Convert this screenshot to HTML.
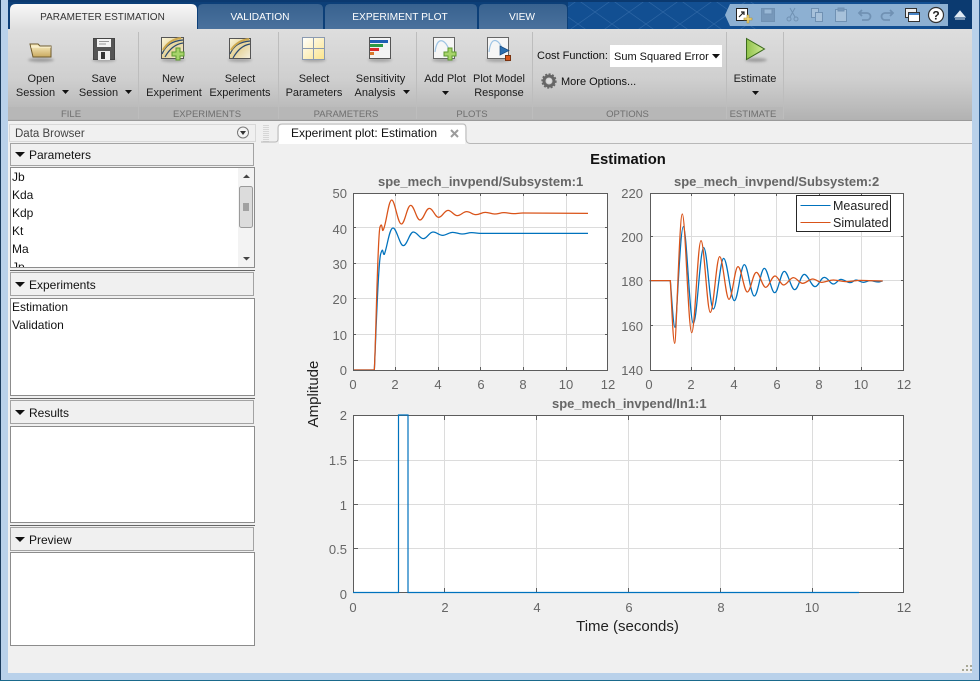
<!DOCTYPE html>
<html><head><meta charset="utf-8"><style>
html,body{margin:0;padding:0;width:980px;height:681px;overflow:hidden;background:#f0f0f0}
svg{display:block;position:absolute;left:0;top:0}
text{font-family:"Liberation Sans",sans-serif;white-space:pre}
.rb{font-size:11px;fill:#1c1c1c;text-anchor:middle}
.ft{font-size:9.500px;fill:#6f6f6f;text-anchor:middle}
.tb{font-size:10.200px;fill:#fff;text-anchor:middle}
.ui{font-size:12px;fill:#111}
.us{font-size:11px;fill:#111}
.tk{font-size:13px;fill:#666}
.tr{font-size:13px;fill:#666;text-anchor:end}
.tm{font-size:13px;fill:#666;text-anchor:middle}
.pt{font-size:13px;font-weight:bold;fill:#666;text-anchor:start}
.grid{stroke:#dcdcdc;stroke-width:1;fill:none}
.box{stroke:#5c5c5c;stroke-width:1;fill:none}
.tick{stroke:#5c5c5c;stroke-width:1;fill:none}
.blu{stroke:#0072bd;stroke-width:3.800;fill:none}
.red{stroke:#d95319;stroke-width:3.800;fill:none}
.hd{fill:#f0f0f0;stroke:#a3a3a3}
.ls{fill:#fff;stroke:#8c8c8c;stroke-width:1}
</style></head><body>
<svg width="980" height="681" viewBox="0 0 980 681" xmlns="http://www.w3.org/2000/svg">
<defs>
<linearGradient id="rib" x1="0" y1="0" x2="0" y2="1"><stop offset="0" stop-color="#dedede"/><stop offset=".55" stop-color="#cfcfcf"/><stop offset="1" stop-color="#b2b2b2"/></linearGradient>
<linearGradient id="atab" x1="0" y1="0" x2="0" y2="1"><stop offset="0" stop-color="#f8f8f8"/><stop offset="1" stop-color="#dfdfdf"/></linearGradient>
<linearGradient id="itab" x1="0" y1="0" x2="0" y2="1"><stop offset="0" stop-color="#38628f"/><stop offset="1" stop-color="#4a719d"/></linearGradient>
<linearGradient id="yel" x1="0" y1="0" x2="1" y2="1"><stop offset="0" stop-color="#fff"/><stop offset="1" stop-color="#fbe48a"/></linearGradient>
<linearGradient id="fold" x1="0" y1="0" x2="0" y2="1"><stop offset="0" stop-color="#fdf3c8"/><stop offset="1" stop-color="#c9a95f"/></linearGradient>
<linearGradient id="grn" x1="0" y1="0" x2="1" y2="0"><stop offset="0" stop-color="#8fc24a"/><stop offset="1" stop-color="#d2ec9a"/></linearGradient>
<linearGradient id="cp" x1="0" y1="0" x2="1" y2="1"><stop offset="0" stop-color="#fbf6dc"/><stop offset=".5" stop-color="#e6d49a"/><stop offset="1" stop-color="#f4f0e0"/></linearGradient>
<pattern id="lat" width="34" height="24" patternUnits="userSpaceOnUse"><path d="M0 0L34 24M34 0L0 24" stroke="#4a7db8" stroke-width=".7" fill="none" opacity=".5"/></pattern>
<filter id="sh" x="-30%" y="-100%" width="160%" height="300%"><feGaussianBlur stdDeviation="1.4"/></filter>
</defs>

<!-- window frame -->
<rect width="980" height="681" fill="#b9d1ea"/>
<rect x="0" y="0" width="1" height="681" fill="#1a3a5c"/>
<rect x="0" y="680" width="980" height="1" fill="#1a6a8c"/>
<rect x="979" y="0" width="1" height="681" fill="#2a5a8c"/>
<rect x="8" y="120" width="964" height="553" fill="#f0f0f0"/>

<!-- header band -->
<rect x="8" y="0" width="964" height="29" fill="#124f92"/>
<rect x="560" y="0" width="200" height="29" fill="url(#lat)"/>
<rect x="8" y="0" width="560" height="29" fill="#0c3f78"/>
<rect x="8" y="0" width="964" height="2" fill="#0b396f"/>
<rect x="940" y="0" width="32" height="29" fill="#0b3a70"/>

<!-- tabs -->
<path d="M10 29V10Q10 4 16 4H191Q197 4 197 10V29Z" fill="url(#atab)"/>
<path d="M198 29V9Q198 4 203 4H318Q323 4 323 9V29Z" fill="url(#itab)"/>
<path d="M325 29V9Q325 4 330 4H472Q477 4 477 9V29Z" fill="url(#itab)"/>
<path d="M479 29V9Q479 4 484 4H562Q567 4 567 9V29Z" fill="url(#itab)"/>
<text x="102.500" y="20" fill="#333" text-anchor="middle" style="font-size:10px">PARAMETER ESTIMATION</text>
<text x="260" y="20" class="tb">VALIDATION</text>
<text x="400" y="20" class="tb">EXPERIMENT PLOT</text>
<text x="522" y="20" class="tb">VIEW</text>

<!-- ribbon -->
<rect x="8" y="29" width="964" height="91" fill="url(#rib)"/>
<rect x="8" y="107" width="775" height="12" fill="#b7b7b7"/>
<rect x="8" y="120" width="964" height="1" fill="#9a9a9a"/>
<g stroke="#bdbdbd" stroke-width="1">
<path d="M138.500 32V119M278.500 32V119M416.500 32V119M532.500 32V119M726.500 32V119M783.500 32V119"/>
</g>

<text x="41" y="82" class="rb">Open</text>
<text x="35.500" y="96" class="rb">Session</text>
<path d="M62 90h7l-3.500 4z" fill="#111"/>
<text x="104" y="82" class="rb">Save</text>
<text x="98.500" y="96" class="rb">Session</text>
<path d="M125 90h7l-3.500 4z" fill="#111"/>
<text x="173" y="82" class="rb">New</text>
<text x="174" y="96" class="rb">Experiment</text>
<text x="240" y="82" class="rb">Select</text>
<text x="240" y="96" class="rb">Experiments</text>
<text x="314" y="82" class="rb">Select</text>
<text x="314" y="96" class="rb">Parameters</text>
<text x="380.500" y="82" class="rb">Sensitivity</text>
<text x="375" y="96" class="rb">Analysis</text>
<path d="M403 90h7l-3.500 4z" fill="#111"/>
<text x="445" y="82" class="rb">Add Plot</text>
<path d="M442 91h7l-3.500 4z" fill="#111"/>
<text x="499" y="82" class="rb">Plot Model</text>
<text x="499" y="96" class="rb">Response</text>
<text x="755" y="82" class="rb">Estimate</text>
<path d="M752 91h7l-3.500 4z" fill="#111"/>

<text x="71" y="117" class="ft">FILE</text>
<text x="207" y="117" class="ft">EXPERIMENTS</text>
<text x="346" y="117" class="ft">PARAMETERS</text>
<text x="472" y="117" class="ft">PLOTS</text>
<text x="627.500" y="117" class="ft">OPTIONS</text>
<text x="753" y="117" class="ft">ESTIMATE</text>

<text x="537" y="59" class="us">Cost Function:</text>
<rect x="610" y="45" width="112" height="22" fill="#fff"/>
<text x="614" y="60" class="us">Sum Squared Error</text>
<path d="M712 54h8l-4 4.500z" fill="#111"/>
<text x="561" y="85" class="us">More Options...</text>

<!-- gear -->
<g fill="none" stroke="#666">
<circle cx="549" cy="81" r="5" stroke-width="3"/>
<circle cx="549" cy="81" r="7" stroke-width="1.300" stroke-dasharray="2 1.600"/>
</g>
<circle cx="549" cy="81" r="2.500" fill="#ddd"/>

<!-- Open folder -->
<ellipse cx="41" cy="60" rx="13" ry="2" fill="#777" opacity=".6" filter="url(#sh)"/>
<path d="M30 44h8l2 2h11v11H33z" fill="url(#fold)" stroke="#6e5a2c"/>
<path d="M31 47h20" stroke="#fff8dc" fill="none"/>
<!-- Save floppy -->
<ellipse cx="104" cy="60" rx="12" ry="2" fill="#777" opacity=".5" filter="url(#sh)"/>
<path d="M93.500 38.500h21v21h-21z" fill="#555" stroke="#444"/>
<rect x="97" y="39" width="14" height="8" fill="#f4f4f4"/>
<path d="M99 41.500h10M99 44h7" stroke="#999"/>
<rect x="98" y="51" width="12" height="9" fill="#eee"/>
<rect x="101" y="52" width="4" height="7" fill="#333"/>
<!-- New Experiment -->
<ellipse cx="173" cy="60" rx="12" ry="2" fill="#777" opacity=".5" filter="url(#sh)"/>
<rect x="161.500" y="37.500" width="22" height="21" fill="url(#cp)" stroke="#555"/>
<path d="M162 54C166 45 172 41 183 40M165 57C170 48 176 44 183 43" fill="none" stroke="#2b4a70" stroke-width="1.200"/>
<path d="M163 50C167 43 173 39 181 38" fill="none" stroke="#cda84d" stroke-width="2"/>
<path d="M176 48h4v4h4v4h-4v4h-4v-4h-4v-4h4z" fill="#a7d36a" stroke="#5d9a2e"/>
<!-- Select Experiments -->
<ellipse cx="240" cy="60" rx="12" ry="2" fill="#777" opacity=".5" filter="url(#sh)"/>
<rect x="229.500" y="38.500" width="21" height="20" fill="url(#cp)" stroke="#555"/>
<path d="M230 54C234 45 240 42 250 41M233 58C238 49 244 45 250 44" fill="none" stroke="#2b4a70" stroke-width="1.200"/>
<path d="M231 50C235 44 241 40 249 39" fill="none" stroke="#cda84d" stroke-width="2"/>
<!-- Select Parameters -->
<ellipse cx="314" cy="60" rx="12" ry="2" fill="#777" opacity=".5" filter="url(#sh)"/>
<rect x="302.500" y="37.500" width="22" height="22" fill="url(#yel)" stroke="#8b9ab0"/>
<path d="M313.500 38V59M303 48.500H324" stroke="#8b9ab0" fill="none"/>
<!-- Sensitivity -->
<ellipse cx="380" cy="60" rx="12" ry="2" fill="#777" opacity=".5" filter="url(#sh)"/>
<rect x="369.500" y="37.500" width="21" height="21" fill="#f3f3f3" stroke="#555"/>
<rect x="370" y="40" width="18" height="3" fill="#1f5fb4"/>
<rect x="370" y="44" width="13" height="3" fill="#2e9a45"/>
<rect x="370" y="48" width="9" height="3" fill="#d82c2c"/>
<rect x="370" y="52" width="4" height="3" fill="#d8792c"/>
<!-- Add Plot -->
<ellipse cx="444" cy="60" rx="12" ry="2" fill="#777" opacity=".5" filter="url(#sh)"/>
<rect x="433.500" y="37.500" width="21" height="21" fill="#f6f6f6" stroke="#666"/>
<path d="M435 52C437 36 445 38 450 52" fill="none" stroke="#9fc4e4" stroke-width="1.200"/>
<path d="M448 48h4v4h4v4h-4v4h-4v-4h-4v-4h4z" fill="#a7d36a" stroke="#5d9a2e"/>
<!-- Plot Model Response -->
<ellipse cx="498" cy="60" rx="12" ry="2" fill="#777" opacity=".5" filter="url(#sh)"/>
<rect x="487.500" y="37.500" width="21" height="21" fill="#f6f6f6" stroke="#666"/>
<path d="M489 52C491 36 498 38 503 50" fill="none" stroke="#9fc4e4" stroke-width="1.200"/>
<path d="M500 46L509 50.500L500 55z" fill="#2c6fb0" stroke="#174a80" stroke-width=".7"/>
<rect x="505.500" y="55.500" width="5" height="5" fill="#d8561c" stroke="#7a3310"/>
<!-- Estimate play -->
<ellipse cx="756" cy="60" rx="11" ry="2" fill="#777" opacity=".6" filter="url(#sh)"/>
<path d="M746.500 38.500L764.500 49L746.500 59.500z" fill="url(#grn)" stroke="#3b6a1c"/>

<!-- QAT -->
<path d="M725 15L730 4H948V26H730z" fill="#8db0d2"/>
<g>
<rect x="736.500" y="8.500" width="11" height="12" fill="#fff" stroke="#222"/>
<path d="M739 17l5-5m-3 0h3v3" stroke="#222" fill="none" stroke-width="1.200"/>
<path d="M747 15h2v3h3v2h-3v3h-2v-3h-3v-2h3z" fill="#f2d77a" stroke="#a88b2c" stroke-width=".6"/>
<g opacity=".45" fill="#5d7d9e" stroke="#4d6d8e">
<rect x="761.500" y="8.500" width="13" height="13" stroke-width="1"/>
<rect x="764" y="9" width="8" height="5" fill="#a9c2dc"/>
<path d="M790 8l5 9M795 8l-5 9" fill="none"/>
<circle cx="789" cy="19" r="2" fill="none"/><circle cx="796" cy="19" r="2" fill="none"/>
<rect x="811.500" y="8.500" width="7" height="9" fill="#c8d6e4"/><rect x="815.500" y="12.500" width="7" height="9" fill="#c8d6e4"/>
<rect x="835.500" y="9.500" width="11" height="12" fill="#c8d6e4"/><rect x="838" y="8" width="6" height="3"/>
<path d="M859 13h8a3.500 3.500 0 0 1 0 7h-5M862 10l-3 3 3 3" fill="none" stroke-width="1.800"/>
<path d="M893 13h-8a3.500 3.500 0 0 0 0 7h5M890 10l3 3-3 3" fill="none" stroke-width="1.800"/>
</g>
<rect x="905.500" y="8.500" width="11" height="9" fill="#eee" stroke="#333"/>
<rect x="908.500" y="12.500" width="11" height="9" fill="#fff" stroke="#333"/>
<rect x="909" y="13" width="10" height="2" fill="#4a86c8"/>
<circle cx="936" cy="15" r="7.500" fill="#fff" stroke="#333" stroke-width="1.200"/>
<text x="936" y="19.500" style="font-size:12px;font-weight:bold" fill="#222" text-anchor="middle">?</text>
</g>
<path d="M955 19h10M955 17L960 11L965 17z" fill="#dfe9f3" stroke="#dfe9f3"/>

<!-- Left panel -->
<rect x="9.500" y="124.500" width="246" height="17" fill="#f0f0f0" stroke="#d8d8d8"/>
<text x="15" y="137" style="font-size:11.500px;fill:#444">Data Browser</text>
<circle cx="243" cy="132.500" r="5.500" fill="#f4f4f4" stroke="#777"/>
<path d="M240 131h6l-3 4z" fill="#333"/>

<rect x="10.500" y="143.500" width="243" height="22" class="hd"/>
<path d="M15 152h10l-5 5z" fill="#111"/>
<text x="29" y="159" class="ui">Parameters</text>
<rect x="10.500" y="167.500" width="244" height="100" class="ls"/>
<svg x="11" y="168" width="243" height="99" viewBox="11 168 243 99">
<text x="12" y="181" class="ui">Jb</text>
<text x="12" y="199" class="ui">Kda</text>
<text x="12" y="217" class="ui">Kdp</text>
<text x="12" y="235" class="ui">Kt</text>
<text x="12" y="253" class="ui">Ma</text>
<text x="12" y="271" class="ui">Jp</text>
</svg>
<rect x="238" y="168" width="16" height="99" fill="#f3f3f3"/>
<rect x="239.500" y="186.500" width="13" height="41" rx="2" fill="#dcdcdc" stroke="#9a9a9a"/>
<path d="M243 204h6M243 206h6M243 208h6M243 210h6" stroke="#666" fill="none"/>
<path d="M243 178h7l-3.500-3.500z" fill="#444"/>
<path d="M243 257h7l-3.500 3.500z" fill="#444"/>
<rect x="10" y="270" width="245" height="1" fill="#666"/>

<rect x="10.500" y="272.500" width="243" height="23" class="hd"/>
<path d="M15 282h10l-5 5z" fill="#111"/>
<text x="29" y="289" class="ui">Experiments</text>
<rect x="10.500" y="298.500" width="244" height="97" class="ls"/>
<text x="12" y="311" class="ui">Estimation</text>
<text x="12" y="329" class="ui">Validation</text>
<rect x="10" y="398" width="245" height="1" fill="#666"/>

<rect x="10.500" y="400.500" width="243" height="23" class="hd"/>
<path d="M15 410h10l-5 5z" fill="#111"/>
<text x="29" y="417" class="ui">Results</text>
<rect x="10.500" y="426.500" width="244" height="96" class="ls"/>
<rect x="10" y="525" width="245" height="1" fill="#666"/>

<rect x="10.500" y="527.500" width="243" height="23" class="hd"/>
<path d="M15 537h10l-5 5z" fill="#111"/>
<text x="29" y="544" class="ui">Preview</text>
<rect x="10.500" y="552.500" width="244" height="93" class="ls"/>

<!-- Doc tab strip -->
<path d="M264 125v17M266 125v17M268 125v17" stroke="#bbb" stroke-dasharray="1 1" fill="none"/>
<path d="M261 142H275Q278 142 278 139V128Q278 124 282 124H463Q466 124 466 128V139Q466 143 470 143.500H972" fill="none" stroke="#b8b8b8"/>
<path d="M279 144V128Q279 125 282 125H463Q465 125 465 128V144Z" fill="#fff"/>
<text x="291" y="137" class="ui">Experiment plot: Estimation</text>
<path d="M451 130l7 7M458 130l-7 7" stroke="#9c9c9c" stroke-width="2" fill="none"/>

<!-- Figure -->
<text x="628" y="164" style="font-size:14.800px;font-weight:bold" fill="#111" text-anchor="middle">Estimation</text>

<!-- Plot 1 -->
<rect x="353" y="193" width="255" height="177" fill="#fff"/>
<path class="grid" d="M395.500 193V370M438.500 193V370M480.500 193V370M523.500 193V370M566.500 193V370M353 227.500H608M353 263.500H608M353 298.500H608M353 334.500H608"/>
<path class="tick" d="M395.500 193v3M438.500 193v3M480.500 193v3M523.500 193v3M566.500 193v3M395.500 370v-3M438.500 370v-3M480.500 370v-3M523.500 370v-3M566.500 370v-3M353 227.500h3M353 263.500h3M353 298.500h3M353 334.500h3M608 227.500h-3M608 263.500h-3M608 298.500h-3M608 334.500h-3"/>
<g transform="translate(340,170) scale(.33333)">
<path class="blu" d="M40 600H103C108 500 114 280 122 252S128 256 133 253C142 230 148 174 159 174S179 227 190 227S209 186 220 186S239 206 250 206S268 186 279 186S297 196 308 196S327 187 338 187S355 192 366 192S384 188 395 188S410 190 420 190L744 190"/>
<path class="red" d="M40 600H103C108 500 113 190 120 171S126 186 129 181C138 170 145 90 155 90S173 162 184 162S201 106 212 106S229 150 240 150S257 115 268 115S285 142 296 142S313 121 324 121S341 137 352 137S369 125 380 125S397 134 408 134S425 127 436 127S453 132 464 132S481 128 492 128S509 131 520 131S537 129 548 129L744 130"/>
</g>
<rect x="353.500" y="193.500" width="254" height="177" class="box"/>
<text x="378" y="186" class="pt">spe_mech_invpend/Subsystem:1</text>
<text x="347" y="198" class="tr">50</text>
<text x="347" y="234" class="tr">40</text>
<text x="347" y="269" class="tr">30</text>
<text x="347" y="304" class="tr">20</text>
<text x="347" y="340" class="tr">10</text>
<text x="347" y="375" class="tr">0</text>
<text x="353" y="389" class="tm">0</text>
<text x="395" y="389" class="tm">2</text>
<text x="438" y="389" class="tm">4</text>
<text x="481" y="389" class="tm">6</text>
<text x="523" y="389" class="tm">8</text>
<text x="566" y="389" class="tm">10</text>
<text x="608" y="389" class="tm">12</text>

<!-- Plot 2 -->
<rect x="650" y="193" width="254" height="177" fill="#fff"/>
<path class="grid" d="M691.500 193V370M734.500 193V370M776.500 193V370M819.500 193V370M861.500 193V370M650 236.500H904M650 280.500H904M650 325.500H904"/>
<path class="tick" d="M691.500 193v3M734.500 193v3M776.500 193v3M819.500 193v3M861.500 193v3M691.500 370v-3M734.500 370v-3M776.500 370v-3M819.500 370v-3M861.500 370v-3M650 236.500h3M650 280.500h3M650 325.500h3M904 236.500h-3M904 280.500h-3M904 325.500h-3"/>
<g transform="translate(620,170) scale(.33333)">
<path class="blu" d="M89 332H151C155 380 160 472 165 472S180 170 190 170S209 460 220 460S240 233 251 233S269 417 280 417S300 265 311 265S332 392 343 392S362 284 373 284S392 378 403 378S422 295 433 295S453 368 464 368S482 304 493 304S513 359 524 359S542 313 553 313S574 350 585 350S602 322 613 322S630 342 640 342S653 328 663 328S680 338 690 338S700 330 708 330S722 337 730 337S742 332 750 332S767 336 775 336S782 333 788 333"/>
<path class="red" d="M89 332H151C155 400 159 520 164 520S178 132 187 132S205 488 215 488S233 212 243 212S261 427 271 427S289 260 299 260S317 388 327 388S344 290 354 290S372 366 382 366S399 307 409 307S427 352 437 352S455 318 465 318S481 345 491 345S510 323 520 323S538 340 548 340S568 327 578 327S595 337 605 337S630 330 640 330S670 335 680 335S710 331 720 331L788 333"/>
</g>
<rect x="650.500" y="193.500" width="253" height="177" class="box"/>
<text x="674" y="186" class="pt">spe_mech_invpend/Subsystem:2</text>
<rect x="796.500" y="195.500" width="94" height="36" fill="#fff" stroke="#262626"/>
<path d="M800.500 205.500h30" stroke="#0072bd" fill="none"/>
<path d="M800.500 222.500h30" stroke="#d95319" fill="none"/>
<text x="833" y="210" style="font-size:12.500px" fill="#222">Measured</text>
<text x="833" y="227" style="font-size:12.500px" fill="#222">Simulated</text>
<text x="643" y="198" class="tr">220</text>
<text x="643" y="242" class="tr">200</text>
<text x="643" y="286" class="tr">180</text>
<text x="643" y="331" class="tr">160</text>
<text x="643" y="375" class="tr">140</text>
<text x="649" y="389" class="tm">0</text>
<text x="691" y="389" class="tm">2</text>
<text x="734" y="389" class="tm">4</text>
<text x="777" y="389" class="tm">6</text>
<text x="819" y="389" class="tm">8</text>
<text x="861" y="389" class="tm">10</text>
<text x="904" y="389" class="tm">12</text>

<!-- Plot 3 -->
<rect x="353" y="415" width="551" height="178" fill="#fff"/>
<path class="grid" d="M444.500 415V593M536.500 415V593M628.500 415V593M720.500 415V593M812.500 415V593M353 460.500H904M353 504.500H904M353 548.500H904"/>
<path class="tick" d="M444.500 415v5M536.500 415v5M628.500 415v5M720.500 415v5M812.500 415v5M444.500 593v-5M536.500 593v-5M628.500 593v-5M720.500 593v-5M812.500 593v-5M353 460.500h5M353 504.500h5M353 548.500h5M904 460.500h-5M904 504.500h-5M904 548.500h-5"/>
<rect x="353.500" y="415.500" width="550" height="177" class="box"/>
<path d="M353 592.500H398.500V415H408V592.500H859" stroke="#0072bd" stroke-width="1.200" fill="none"/>
<text x="552" y="408" class="pt">spe_mech_invpend/In1:1</text>
<text x="347" y="420" class="tr">2</text>
<text x="347" y="465" class="tr">1.5</text>
<text x="347" y="510" class="tr">1</text>
<text x="347" y="554" class="tr">0.5</text>
<text x="347" y="599" class="tr">0</text>
<text x="353" y="612" class="tm">0</text>
<text x="445" y="612" class="tm">2</text>
<text x="537" y="612" class="tm">4</text>
<text x="629" y="612" class="tm">6</text>
<text x="721" y="612" class="tm">8</text>
<text x="812" y="612" class="tm">10</text>
<text x="904" y="612" class="tm">12</text>

<text x="318" y="394" transform="rotate(-90 318 394)" style="font-size:15px" fill="#222" text-anchor="middle">Amplitude</text>
<text x="627.500" y="631" style="font-size:15px" fill="#222" text-anchor="middle">Time (seconds)</text>

<!-- grip -->
<path d="M970 662h0M966 666h2M970 666h2M962 670h2M966 670h2M970 670h2" stroke="#a8a896" stroke-width="2" fill="none"/>
</svg>
</body></html>
